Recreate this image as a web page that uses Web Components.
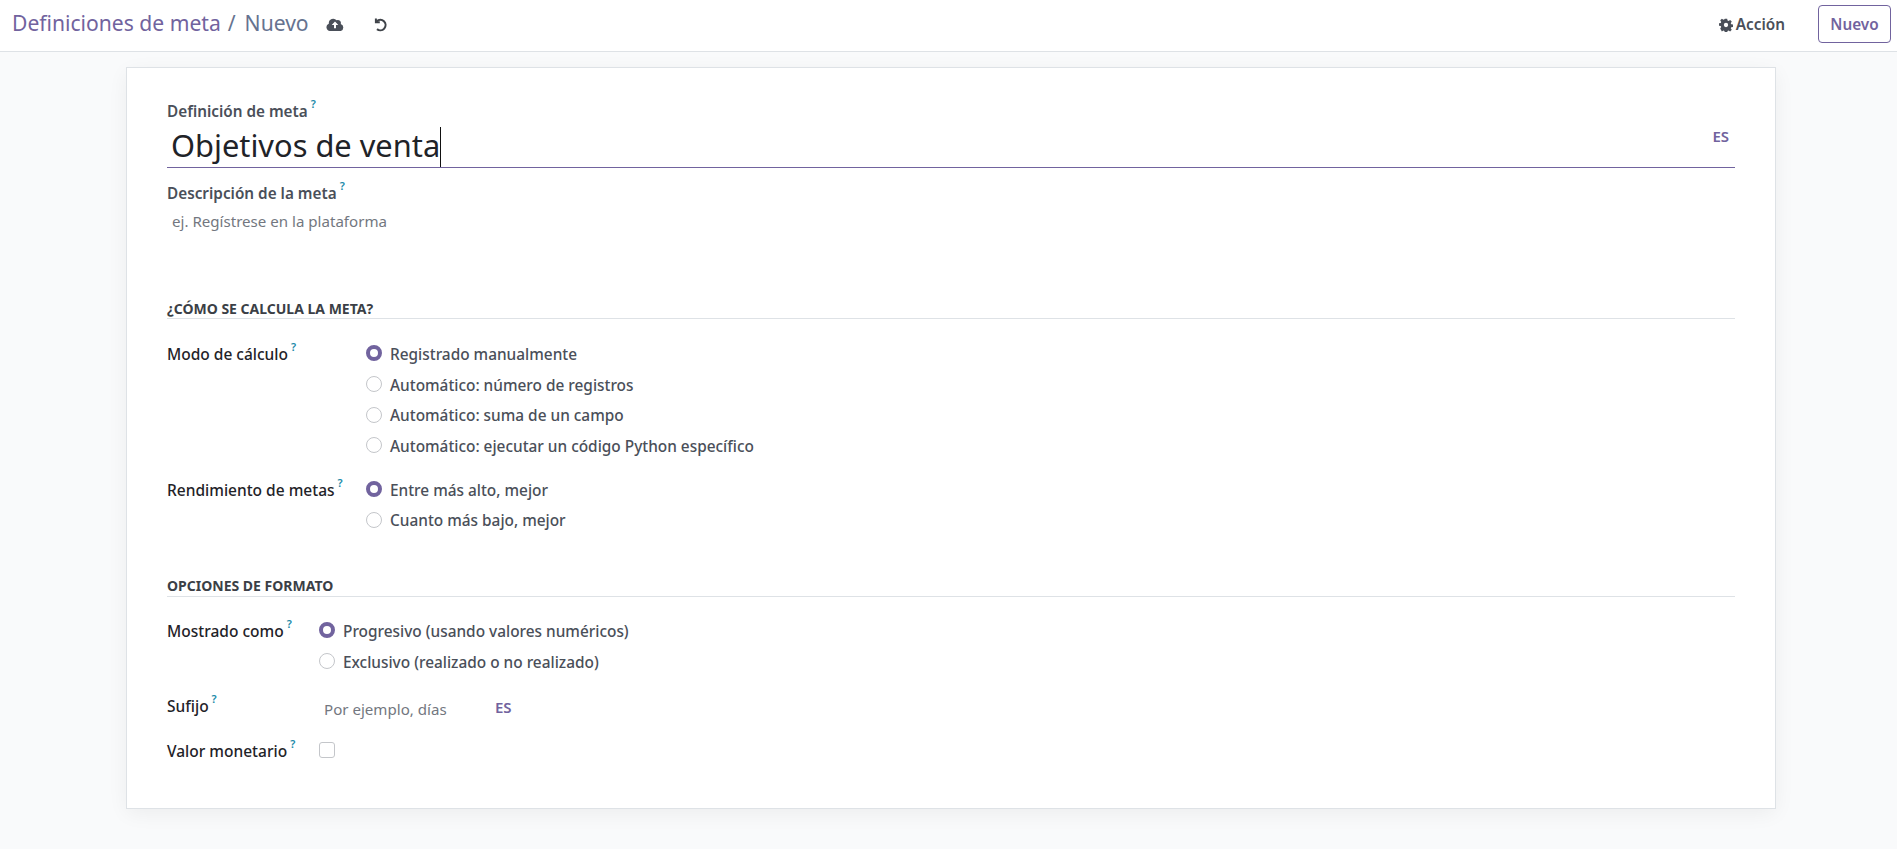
<!DOCTYPE html>
<html lang="es"><head><meta charset="utf-8"><title>Definiciones de meta</title>
<style>
html,body{margin:0;height:100%}
body{background:#f9fafb;font:15.3px/21px "Noto Sans",sans-serif;color:#4c4c4c;overflow:hidden}
</style></head><body>
<goal-app></goal-app>
<script>
const def=(n,css,html)=>{customElements.define(n,class extends HTMLElement{
  connectedCallback(){if(this.shadowRoot)return;const s=this.attachShadow({mode:'open'});
    s.innerHTML='<style>'+css+'</style>'+html;}
});};
def('help-mark',':host{display:inline-block;color:#2089a8;font-size:11px;line-height:1;font-weight:600;vertical-align:top;margin:-3px 0 0 3px}','?');
def('field-label',':host{display:block;font-weight:500;font-size:15.5px;color:#1f2328;white-space:nowrap}:host([muted]){color:#4a4f59;font-weight:600;font-size:15.3px}','<slot></slot><help-mark></help-mark>');
def('radio-opt',`:host{display:flex;align-items:center;height:30.7px;font-weight:500;font-size:15.4px;color:#4a4f59;white-space:nowrap}
 i{box-sizing:border-box;width:16px;height:16px;border-radius:50%;border:1px solid #c4c6ca;background:#fff;margin-right:8px;flex:none;position:relative;top:-1px}
 :host([on]) i{border:4.5px solid #71639e;background:#fff}`,'<i></i><slot></slot>');
def('section-head',`:host{display:block;font-size:14px;line-height:18px;font-weight:700;color:#3b3f46;border-bottom:1px solid #dee2e6;text-transform:uppercase}`,'<slot></slot>');
def('lang-tag',':host{display:inline-block;font-size:15px;font-weight:600;color:#71639e;line-height:18px}','<slot></slot>');
def('form-row',`:host{display:flex;align-items:flex-start}
 .l{flex:none;width:var(--lw,199px);padding-top:var(--lp,5px)}.c{flex:1;min-width:0}`,'<div class="l"><slot name="label"></slot></div><div class="c"><slot></slot></div>');
def('top-bar',`:host{display:flex;align-items:center;box-sizing:border-box;height:52px;background:#fff;border-bottom:1px solid #dee2e6;padding:0 6px 0 12px}
 .bc{font-size:21.1px;line-height:26px;color:#71639e;white-space:nowrap;position:relative;top:-3px}
 .bc span{color:#667390}.bc b{font-weight:400;color:#667390;margin:0 9px 0 7px}
 svg{display:block;flex:none}
 .save{margin-left:17px;position:relative;top:-1px}.undo{margin-left:29px;position:relative;top:-1px}
 .sp{flex:1}
 .act{display:flex;align-items:center;gap:3px;font-weight:600;color:#4a4f59;margin-right:33px;font-size:15.3px;position:relative;top:-1px}
 button{font:600 15.3px "Noto Sans",sans-serif;color:#71639e;background:#fff;border:1px solid #71639e;border-radius:4px;height:38px;width:73px;padding:0;position:relative;top:-2px}`,
 `<div class="bc">Definiciones de meta<b>/</b><span>Nuevo</span></div>
 <svg class="save" width="18" height="14" viewBox="0 0 18 14"><path fill="#4a4f59" d="M14.7 6.1A3 3 0 0 0 10.6 2.3 4.4 4.4 0 0 0 2.8 5.2v.5A3.8 3.8 0 0 0 4 13h10.8a3.6 3.6 0 0 0-.1-6.9z"/><path fill="#fff" d="M9 3.6l3.3 3.5H10v3.2H8V7.1H5.7z"/></svg>
 <svg class="undo" width="16" height="16" viewBox="0 0 16 16" fill="none" stroke="#3f4349" stroke-width="2.1"><path d="M3.7 4.4A5.2 5.2 0 1 1 4 12.1"/><path d="M2.9 1.4v3.9h3.9" stroke-width="2"/></svg>
 <div class="sp"></div>
 <div class="act"><svg width="14" height="14" viewBox="0 0 14 14"><path fill="#4a4f59" fill-rule="evenodd" d="M5.7 0h2.6l.4 2 1.1.5 1.8-1.1 1.8 1.8-1.1 1.8.5 1.1 2 .4v2.6l-2 .4-.5 1.1 1.1 1.8-1.8 1.8-1.8-1.1-1.1.5-.4 2H5.7l-.4-2-1.1-.5-1.8 1.1L.6 11l1.1-1.8-.5-1.1-2-.4V5.1l2-.4.5-1.1L.6 1.8 2.4 0l1.8 1.1L5.3 .6zM7 4.6a2.4 2.4 0 1 0 0 4.8 2.4 2.4 0 0 0 0-4.8z" transform="translate(.7 .7) scale(.9)"/></svg>Acción</div>
 <button>Nuevo</button>`);
def('form-sheet',`:host{display:block;box-sizing:border-box;width:1650px;height:742px;margin:15px 0 0 126px;background:#fff;border:1px solid #dee2e6;box-shadow:0 5px 20px -1px rgba(0,0,0,.06);padding:33px 40px 0}`,'<slot></slot>');
def('title-input',`:host{display:flex;align-items:flex-end;height:45px;border-bottom:1px solid #71639e;position:relative;font-size:30.8px;color:#1f2328}
 .t{padding-left:4px;border-right:1px solid #111;height:40px;line-height:36px;white-space:nowrap}
 .es{position:absolute;right:6px;top:5px}`,'<div class="t"><slot></slot></div><lang-tag class="es">ES</lang-tag>');
def('goal-app',`:host{display:block}
 .ph{color:#737780;padding-left:5px;white-space:nowrap;font-size:15.1px}
 .dl{margin-top:15px}
 .desc{margin-top:7px}
 section-head.a{margin-top:68px}
 .r1{--lw:199px;margin-top:20px}
 .r2{--lw:199px;margin-top:13px}
 section-head.b{margin-top:41px;padding-bottom:1px}
 .r3{--lw:152px;margin-top:19px}
 .suf{--lw:152px;margin-top:18px}
 .suf .in{display:flex;align-items:flex-start}
 .suf lang-tag{margin-top:2px}
 .mon{--lw:152px;margin-top:21px}
 .box{display:block;box-sizing:border-box;width:16px;height:16px;border:1px solid #c4c6ca;border-radius:3px;background:#fff;margin-top:1px}`,
 `<top-bar></top-bar>
 <form-sheet>
  <field-label muted>Definición de meta</field-label>
  <title-input>Objetivos de venta</title-input>
  <field-label muted class="dl">Descripción de la meta</field-label>
  <div class="ph desc">ej. Regístrese en la plataforma</div>
  <section-head class="a">¿Cómo se calcula la meta?</section-head>
  <form-row class="r1"><field-label slot="label">Modo de cálculo</field-label>
   <radio-opt on>Registrado manualmente</radio-opt><radio-opt>Automático: número de registros</radio-opt><radio-opt>Automático: suma de un campo</radio-opt><radio-opt>Automático: ejecutar un código Python específico</radio-opt></form-row>
  <form-row class="r2"><field-label slot="label">Rendimiento de metas</field-label>
   <radio-opt on>Entre más alto, mejor</radio-opt><radio-opt>Cuanto más bajo, mejor</radio-opt></form-row>
  <section-head class="b">Opciones de formato</section-head>
  <form-row class="r3"><field-label slot="label">Mostrado como</field-label>
   <radio-opt on>Progresivo (usando valores numéricos)</radio-opt><radio-opt>Exclusivo (realizado o no realizado)</radio-opt></form-row>
  <form-row class="suf" style="--lp:0px"><field-label slot="label">Sufijo</field-label>
   <div class="in"><div class="ph" style="width:171px;padding-top:3px">Por ejemplo, días</div><lang-tag>ES</lang-tag></div></form-row>
  <form-row class="mon" style="--lp:0px"><field-label slot="label">Valor monetario</field-label><span class="box"></span></form-row>
 </form-sheet>`);
</script></body></html>
